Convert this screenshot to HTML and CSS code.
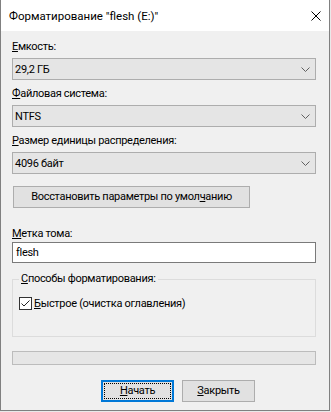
FILE: index.html
```html
<!DOCTYPE html>
<html>
<head>
    <title>Форматирование</title>
    <link rel="stylesheet" href="styles.css">
</head>
<body>
    <div class="dialog">
        <div class="titlebar">
            <span class="title">Форматирование "flesh (E:)"</span>
            <svg class="close" width="10" height="10" viewBox="0 0 10 10">
                <path d="M0.5 0.5 L9.5 9.5 M9.5 0.5 L0.5 9.5" stroke="#000" stroke-width="1" fill="none"/>
            </svg>
        </div>

        <div class="content">
            <div class="field">
                <label class="caption"><u>Е</u>мкость:</label>
                <div class="combo">
                    <span>29,2 ГБ</span>
                    <svg class="chevron" width="9" height="5" viewBox="0 0 9 5"><path d="M0.5 0.5 L4.5 4.5 L8.5 0.5" stroke="#606060" fill="none"/></svg>
                </div>
            </div>

            <div class="field">
                <label class="caption"><u>Ф</u>айловая система:</label>
                <div class="combo">
                    <span>NTFS</span>
                    <svg class="chevron" width="9" height="5" viewBox="0 0 9 5"><path d="M0.5 0.5 L4.5 4.5 L8.5 0.5" stroke="#606060" fill="none"/></svg>
                </div>
            </div>

            <div class="field last">
                <label class="caption"><u>Р</u>азмер единицы распределения:</label>
                <div class="combo">
                    <span>4096 байт</span>
                    <svg class="chevron" width="9" height="5" viewBox="0 0 9 5"><path d="M0.5 0.5 L4.5 4.5 L8.5 0.5" stroke="#606060" fill="none"/></svg>
                </div>
            </div>

            <button type="button" class="btn restore">Восстановить параметры по умол<u>ч</u>анию</button>

            <div class="field volume">
                <label class="caption"><u>М</u>етка тома:</label>
                <div class="textbox">flesh</div>
            </div>

            <fieldset class="group">
                <legend><u>С</u>пособы форматирования:</legend>
                <label class="check">
                    <svg class="box" width="13" height="13" viewBox="0 0 13 13">
                        <rect x="0.5" y="0.5" width="12" height="12" fill="#fff" stroke="#333"/>
                        <path d="M2.5 6.5 L5 9 L10.5 3.5" stroke="#222" fill="none"/>
                    </svg>
                    <span><u>Б</u>ыстрое (очистка оглавления)</span>
                </label>
            </fieldset>

            <div class="progress"></div>

            <div class="actions">
                <button type="button" class="btn default"><u>Н</u>ачать</button>
                <button type="button" class="btn"><u>З</u>акрыть</button>
            </div>
        </div>
    </div>
</body>
</html>
```

FILE: styles.css
```css
html {background: #e9e9e9;}
body {margin: 0; font-family: Roboto, "Noto Sans", sans-serif; font-size: 11px; letter-spacing: -0.3px; color: #000;}
u {text-underline-offset: 1px;}

/* Window */
.dialog {width: 330px; height: 411px; box-sizing: border-box; background: #f0f0f0; border: 1px solid #808080; border-top: 0;}
.titlebar {height: 31px; background: #fff; display: flex; align-items: center; padding-left: 8px; font-size: 11.5px; letter-spacing: 0;}
.title {flex: 1; line-height: 16px; white-space: nowrap;}
.close {margin-right: 8px; display: block;}

.content {padding: 8px 13px 0 11px;}

/* Fields */
.field {margin-bottom: 6px;}
.field.last {margin-bottom: 12px;}
.caption {display: block; line-height: 16px; margin-bottom: 3px; white-space: nowrap;}
.combo {height: 22px; box-sizing: border-box; border: 1px solid #adadad; background: #e5e5e5; display: flex; align-items: center; justify-content: space-between; padding: 0 5px 0 2px;}
.chevron {display: block;}

.volume {margin: 18px 0 0 0;}
.volume .caption {margin-bottom: 0;}
.textbox {height: 21px; box-sizing: border-box; border: 1px solid #7a7a7a; background: #fff; padding-left: 3px; line-height: 19px;}

/* Buttons */
.btn {font-family: inherit; font-size: inherit; letter-spacing: inherit; color: #000; height: 22px; box-sizing: border-box; border: 1px solid #adadad; background: #e1e1e1; padding: 0; margin: 0; line-height: 18px; white-space: nowrap;}
.restore {display: block; width: 237px; margin-left: 1px;}
.default {border-color: #0078d7; box-shadow: inset 0 0 0 1px #0078d7; outline: 1px dotted #000; outline-offset: -4px;}

/* Group */
.group {margin: 8px 0 0 0; min-width: 0; border: 1px solid #dcdcdc; padding: 0 6px 25px 6px;}
.group legend {padding: 0 2px; line-height: 16px;}
.check {display: flex; align-items: center; gap: 2px; height: 16px; margin-top: 8px; white-space: nowrap;}
.box {display: block;}

.progress {margin-top: 14px; height: 14px; box-sizing: border-box; border: 1px solid #bcbcbc; background: #e6e6e6;}

.actions {display: flex; gap: 8px; margin-top: 15px; padding-left: 89px;}
.actions .btn {width: 73px;}
```
